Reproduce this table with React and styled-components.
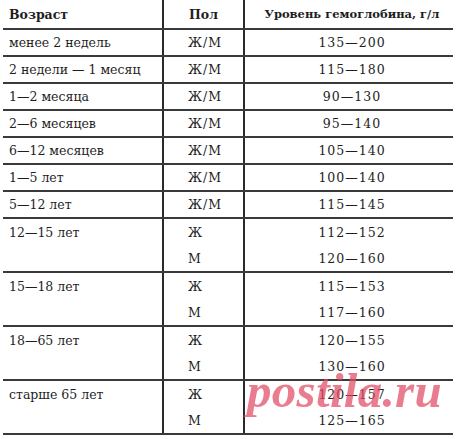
import React from 'react'
import styled, { createGlobalStyle } from 'styled-components'

const GlobalStyle = createGlobalStyle`
  html, body {
    margin: 0;
    padding: 0;
    background: #ffffff;
  }
  body {
    font-family: "DejaVu Serif", "Liberation Serif", serif;
    color: #1e1e1e;
  }
`

const Page = styled.div`
  position: relative;
  width: 460px;
  height: 439px;
  overflow: hidden;
  background: #ffffff;
`

const Table = styled.div`
  margin-left: 3px;
  width: 450px;
`

const Row = styled.div`
  display: grid;
  grid-template-columns: 159px 83px 208px;
  border-bottom: 2px solid #3a3a3a;
`

const Cell = styled.div`
  display: flex;
  flex-direction: column;
  font-size: 12.5px;
  font-weight: ${p => (p.$head ? 700 : 400)};
`

const AgeCell = styled(Cell)`
  padding-left: 6px;
`

const SexCell = styled(Cell)`
  border-left: 2px solid #2a2a2a;
  border-right: 2px solid #2a2a2a;
  padding-left: ${p => (p.$head ? 0 : 24)}px;
  align-items: ${p => (p.$head ? 'center' : 'flex-start')};
  letter-spacing: ${p => (p.$head ? 0 : 1)}px;
`

const ValueCell = styled(Cell)`
  align-items: center;
  padding-left: 6px;
  font-size: ${p => (p.$head ? 11.5 : 12.5)}px;
  letter-spacing: ${p => (p.$head ? 0 : 1)}px;
`

const Line = styled.div`
  height: ${p => (p.$head ? 28 : p.$double ? 26 : 25)}px;
  display: flex;
  align-items: center;
  white-space: nowrap;
`

const Watermark = styled.div`
  position: absolute;
  left: 247px;
  top: 362px;
  font-family: "Liberation Serif", serif;
  font-style: italic;
  font-weight: 700;
  font-size: 49px;
  letter-spacing: 0.3px;
  color: rgba(226, 74, 100, 0.72);
  pointer-events: none;
`

const rows = [
  { age: 'менее 2 недель', items: [['Ж/М', '135—200']] },
  { age: '2 недели — 1 месяц', items: [['Ж/М', '115—180']] },
  { age: '1—2 месяца', items: [['Ж/М', '90—130']] },
  { age: '2—6 месяцев', items: [['Ж/М', '95—140']] },
  { age: '6—12 месяцев', items: [['Ж/М', '105—140']] },
  { age: '1—5 лет', items: [['Ж/М', '100—140']] },
  { age: '5—12 лет', items: [['Ж/М', '115—145']] },
  { age: '12—15 лет', items: [['Ж', '112—152'], ['М', '120—160']] },
  { age: '15—18 лет', items: [['Ж', '115—153'], ['М', '117—160']] },
  { age: '18—65 лет', items: [['Ж', '120—155'], ['М', '130—160']] },
  { age: 'старше 65 лет', items: [['Ж', '120—157'], ['М', '125—165']] },
]

export default function App() {
  return (
    <Page>
      <GlobalStyle />
      <Table>
        <Row>
          <AgeCell $head>
            <Line $head>Возраст</Line>
          </AgeCell>
          <SexCell $head>
            <Line $head>Пол</Line>
          </SexCell>
          <ValueCell $head>
            <Line $head>Уровень гемоглобина, г/л</Line>
          </ValueCell>
        </Row>
        {rows.map((row, i) => {
          const double = row.items.length > 1
          return (
            <Row key={`row-${i}`}>
              <AgeCell>
                <Line $double={double}>{row.age}</Line>
              </AgeCell>
              <SexCell>
                {row.items.map((it, j) => (
                  <Line key={j} $double={double}>{it[0]}</Line>
                ))}
              </SexCell>
              <ValueCell>
                {row.items.map((it, j) => (
                  <Line key={j} $double={double}>{it[1]}</Line>
                ))}
              </ValueCell>
            </Row>
          )
        })}
      </Table>
      <Watermark>postila.ru</Watermark>
    </Page>
  )
}
